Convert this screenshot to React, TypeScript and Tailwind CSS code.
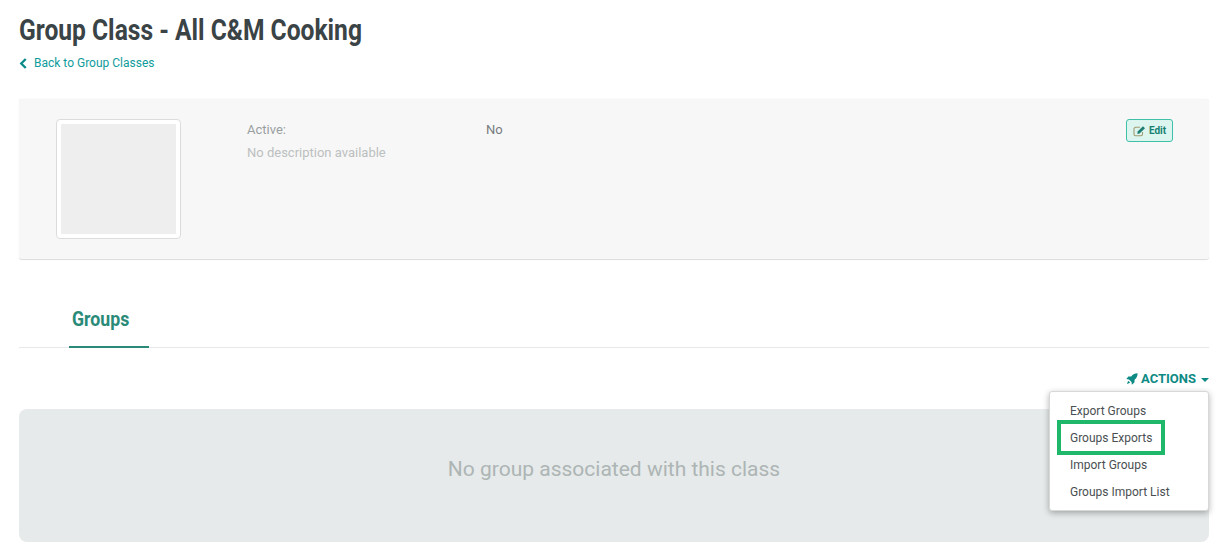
import React from "react";

function Chevron() {
  return (
    <svg viewBox="0 0 10 12" className="w-[9px] h-[11px] mr-[6px] text-[#0b8a8a]">
      <path d="M7.5 1 L2.5 6 L7.5 11" fill="none" stroke="currentColor" strokeWidth="2.6" />
    </svg>
  );
}

function EditIcon() {
  return (
    <svg viewBox="0 0 13 12" className="w-[13px] h-[12px]">
      <path d="M9.5 7v2.2A1.6 1.6 0 0 1 7.9 10.8H2.6A1.6 1.6 0 0 1 1 9.2V3.9A1.6 1.6 0 0 1 2.6 2.3H7" fill="none" stroke="#a09a70" strokeWidth="1.1" />
      <path d="M4.6 6.6 L10 1.2 L12 3.2 L6.6 8.6 L4.4 8.9 Z" fill="#1f7f72" />
    </svg>
  );
}

function Rocket() {
  return (
    <svg viewBox="0 0 13 13" className="w-[12px] h-[12px] mr-[3px]">
      <path d="M12.6 0.4 C9.6 0.4 7.4 1.6 5.6 3.7 L2.6 3.9 L0.4 6.6 L3.2 7 L6 9.8 L6.4 12.6 L9.1 10.4 L9.3 7.4 C11.4 5.6 12.6 3.4 12.6 0.4 Z" fill="currentColor" />
      <path d="M2.4 8.4 L4.6 10.6 L1 12 Z" fill="currentColor" />
    </svg>
  );
}

function Caret() {
  return (
    <svg viewBox="0 0 8 4" className="w-[8px] h-[4px] ml-[5px] mt-[1px]">
      <path d="M0 0H8L4 4Z" fill="currentColor" />
    </svg>
  );
}

export default function App() {
  return (
    <div className="relative w-[1227px] h-[555px] overflow-hidden bg-white font-['Roboto',sans-serif]">
      <div className="pl-[19px] pr-[18px]">
        <h1 className="pt-[13px] h-[46px] text-[30px] leading-[34px] font-bold text-[#3a4346] origin-left scale-x-[0.82] whitespace-nowrap">
          Group Class - All C&amp;M Cooking
        </h1>
        <a className="mt-[7px] flex items-center h-[20px] text-[12px] text-[#0f9c9c]">
          <Chevron />
          <span>Back to Group Classes</span>
        </a>

        <section className="mt-[26px] h-[161px] bg-[#f7f7f7] rounded-[3px] border-b border-[#dedede] shadow-[0_0_1px_rgba(0,0,0,0.12)] flex pt-[20px]">
          <div className="ml-[37px] w-[125px] h-[120px] bg-white border border-[#dcdcdc] rounded-[4px] p-[4px]">
            <div className="w-full h-full bg-[#eeeeee]" />
          </div>
          <div className="ml-[66px] pt-[2px] w-[239px] text-[13px] leading-[18px]">
            <div className="text-[#9a9fa1]">Active:</div>
            <div className="mt-[5px] text-[#bcbfc0] whitespace-nowrap">No description available</div>
          </div>
          <div className="pt-[2px] text-[13px] leading-[18px] text-[#777c7f]">No</div>
          <button className="ml-auto mr-[36px] h-[23px] w-[47px] flex items-center justify-center gap-[3px] rounded-[3px] border border-[#40bfa9] bg-[#dcf5ef] text-[10px] font-bold text-[#16806f]">
            <EditIcon />
            Edit
          </button>
        </section>

        <nav className="mt-[39px] h-[49px] border-b border-[#e8e8e8] flex">
          <div className="ml-[50px] w-[80px] h-[49px] border-b-2 border-[#2a8a78] pl-[3px] pt-[7px]">
            <span className="block text-[20px] leading-[26px] font-bold text-[#2a8a78] origin-left scale-x-[0.885]">Groups</span>
          </div>
        </nav>

        <div className="mt-[22px] h-[18px] flex justify-end items-center text-[13px] font-bold text-[#0d8a84]">
          <Rocket />
          <span>ACTIONS</span>
          <Caret />
        </div>

        <div className="mt-[21px] h-[133px] rounded-[8px] bg-[#e6eaea] flex items-center justify-center pb-[11px] text-[21px] text-[#adb5b5]">
          No group associated with this class
        </div>
      </div>

      <div className="absolute left-[1049px] top-[391px] w-[160px] h-[120px] bg-white rounded-[3px] border border-[#d8d8d8] shadow-[0_2px_6px_rgba(0,0,0,0.3)] pt-[6px] text-[12px] text-[#4a4f52]">
        {["Export Groups", "Groups Exports", "Import Groups", "Groups Import List"].map((t) => (
          <div key={t} className="h-[27px] leading-[27px] pl-[20px] whitespace-nowrap">{t}</div>
        ))}
      </div>
      <div className="absolute left-[1057px] top-[420px] w-[108px] h-[35px] border-[4px] border-[#1fb86a]" />
    </div>
  );
}
